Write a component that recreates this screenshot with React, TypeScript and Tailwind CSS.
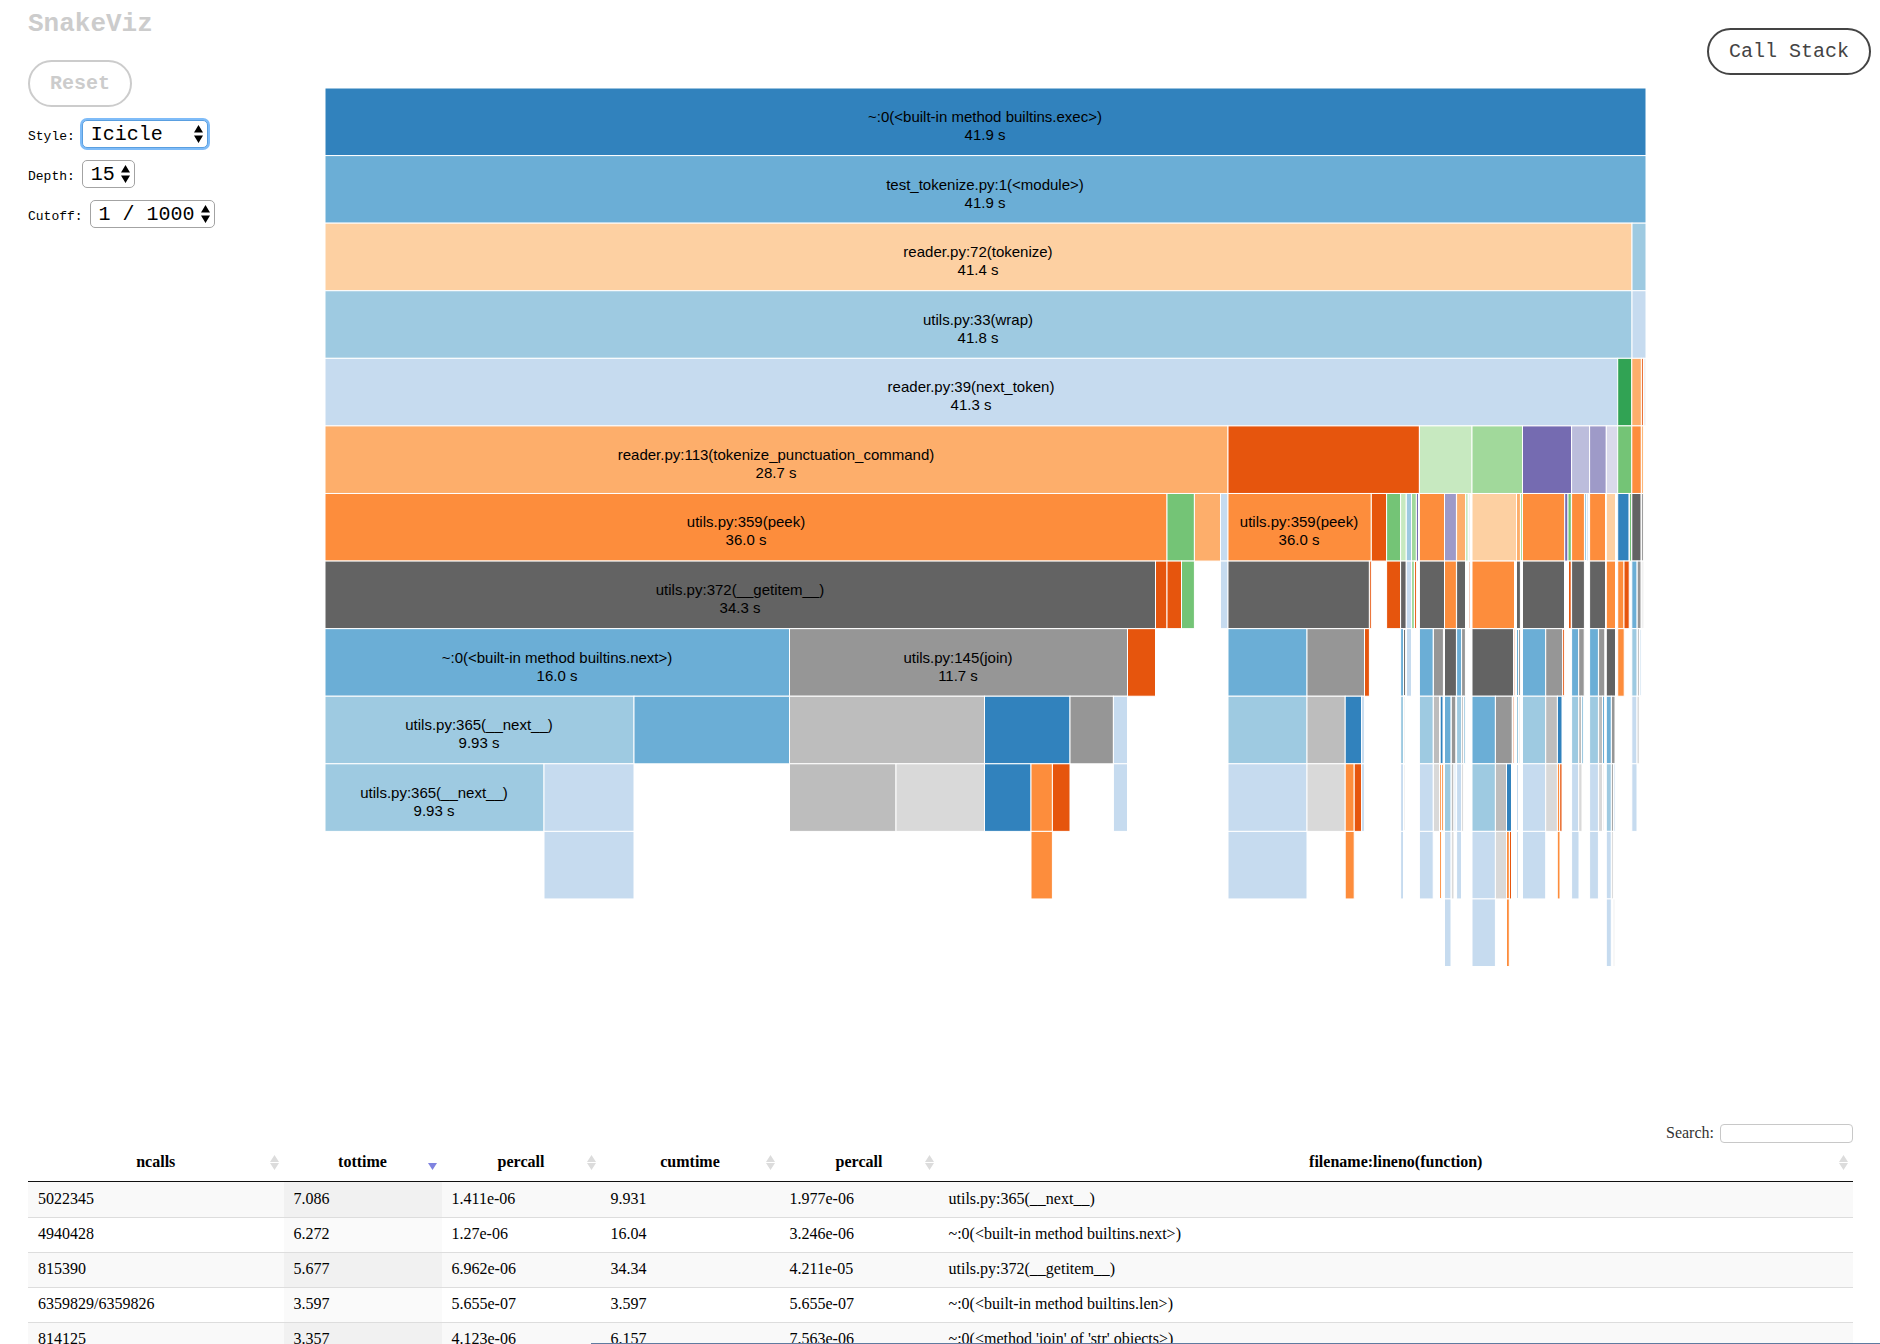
import React from "react";

const C = {
  blue1: "#3182bd", blue2: "#6baed6", blue3: "#9ecae1", blue4: "#c6dbef",
  red: "#e6550d", or2: "#fd8d3c", or3: "#fdae6b", or4: "#fdd0a2",
  gr1: "#31a354", gr2: "#74c476", gr3: "#a1d99b", gr4: "#c7e9c0",
  pu1: "#756bb1", pu2: "#9e9ac8", pu3: "#bcbddc", pu4: "#dadaeb",
  g1: "#636363", g2: "#969696", g3: "#bdbdbd", g4: "#d9d9d9",
  faint: "#f1f1f1", pink: "#f6c9b5", paleBlue: "#dbe9f6",
};

type Cell = [number, number, string, string?, string?];

/* One array per stack level: left edge, right edge, fill, function name, time. */
const levels: Cell[][] = [
  [[325, 1646, C.blue1, "~:0(<built-in method builtins.exec>)", "41.9 s"]],
  [[325, 1646, C.blue2, "test_tokenize.py:1(<module>)", "41.9 s"]],
  [[325, 1632, C.or4, "reader.py:72(tokenize)", "41.4 s"], [1632, 1646, C.blue3]],
  [[325, 1632, C.blue3, "utils.py:33(wrap)", "41.8 s"], [1632, 1646, C.blue4]],
  [
    [325, 1617.7, C.blue4, "reader.py:39(next_token)", "41.3 s"],
    [1617.7, 1631.8, C.gr1], [1631.8, 1641.4, C.or3], [1641.4, 1643.4, C.red], [1643.4, 1646, C.faint],
  ],
  [
    [325, 1228, C.or3, "reader.py:113(tokenize_punctuation_command)", "28.7 s"],
    [1228, 1419.4, C.red], [1419.4, 1472, C.gr4], [1472, 1522.5, C.gr3], [1522.5, 1571.6, C.pu1],
    [1571.6, 1589.6, C.pu3], [1589.6, 1606.3, C.pu2], [1606.3, 1617.7, C.pu4],
    [1617.7, 1631.8, C.gr2], [1631.8, 1641.3, C.or2], [1641.4, 1643.4, C.or3],
  ],
  [
    [325, 1167, C.or2, "utils.py:359(peek)", "36.0 s"],
    [1167, 1194.4, C.gr2], [1194.4, 1220.5, C.or3], [1220.5, 1228, C.blue4],
    [1228, 1371.3, C.or2, "utils.py:359(peek)", "36.0 s"],
    [1371.3, 1386.6, C.red], [1386.6, 1400.6, C.gr2], [1400.6, 1406.2, C.gr4], [1406.3, 1411.5, C.blue3],
    [1411.5, 1416.3, C.gr3], [1416.4, 1418.5, C.pu1], [1419.4, 1444.5, C.or2], [1444.5, 1456.4, C.pu2],
    [1456.6, 1465.5, C.or3], [1465.5, 1468.3, C.gr4], [1468.3, 1470.4, C.faint],
    [1472, 1516.5, C.or4], [1516.5, 1520.4, C.or3], [1520.5, 1522.4, C.gr3],
    [1522.5, 1564.5, C.or2], [1564.7, 1568, C.pu1], [1568, 1571.3, C.gr2],
    [1571.6, 1584.4, C.or2], [1584.5, 1586.5, C.blue3], [1586.5, 1588.6, C.paleBlue],
    [1589.6, 1605.5, C.or2], [1606.3, 1615.5, C.or4], [1617.7, 1629, C.blue1], [1629.4, 1631.5, C.gr2],
    [1631.8, 1641, C.g1], [1641.4, 1643.4, C.g2],
  ],
  [
    [325, 1155.5, C.g1, "utils.py:372(__getitem__)", "34.3 s"],
    [1155.5, 1167, C.red], [1167, 1181.5, C.red], [1181.5, 1194.4, C.gr2], [1220.5, 1228, C.blue4],
    [1228, 1369.4, C.g1], [1369.4, 1371.3, C.red], [1386.6, 1400.6, C.red], [1400.6, 1406.2, C.g1],
    [1406.3, 1411.5, C.blue4], [1411.5, 1414.4, C.gr3], [1414.5, 1416.4, C.red],
    [1419.4, 1444.5, C.g1], [1444.5, 1456.4, C.or2], [1456.6, 1465.5, C.g1], [1468.5, 1470.4, C.pink],
    [1472, 1514.5, C.or2], [1516.5, 1520.4, C.g1], [1522.5, 1564.5, C.g1], [1568.5, 1571.2, C.red],
    [1571.6, 1584.4, C.g1], [1589.6, 1605.5, C.g1], [1606.3, 1615.5, C.or2], [1617.7, 1624, C.or2],
    [1624, 1629.2, C.red], [1631.8, 1637, C.blue2], [1637.2, 1641.2, C.g2], [1641.2, 1644, C.faint],
  ],
  [
    [325, 789.5, C.blue2, "~:0(<built-in method builtins.next>)", "16.0 s"],
    [789.5, 1127.5, C.g2, "utils.py:145(join)", "11.7 s"],
    [1127.5, 1155.5, C.red], [1228, 1307, C.blue2], [1307, 1364.5, C.g2], [1364.5, 1369.4, C.red],
    [1400.6, 1403.5, C.blue2], [1403.5, 1405.4, C.g1], [1406.5, 1411.5, C.blue4],
    [1419.4, 1433.2, C.blue2], [1433.4, 1443.4, C.g2], [1444.5, 1456.4, C.g1], [1456.6, 1461.5, C.blue2],
    [1461.6, 1465.4, C.g2], [1472, 1513.5, C.g1], [1513.5, 1515.2, C.pink],
    [1516.5, 1518.5, C.blue2], [1518.5, 1520.4, C.g2], [1522.5, 1545.7, C.blue2], [1545.7, 1562.6, C.g2],
    [1562.6, 1564.4, C.red], [1571.6, 1578.5, C.blue2], [1578.7, 1584.2, C.g2],
    [1589.6, 1598.4, C.blue2], [1598.6, 1604.8, C.g2], [1606.3, 1615.5, C.g1], [1617.7, 1624.2, C.or2],
    [1631.8, 1637, C.blue3], [1637.4, 1639.4, C.g3], [1639.6, 1641.4, C.paleBlue],
  ],
  [
    [325, 634, C.blue3, "utils.py:365(__next__)", "9.93 s"],
    [634, 789.5, C.blue2], [789.5, 984.5, C.g3], [984.5, 1070, C.blue1], [1070, 1113.4, C.g2],
    [1113.4, 1127.5, C.blue4], [1228, 1307, C.blue3], [1307, 1345.2, C.g3], [1345.2, 1361.6, C.blue1],
    [1361.6, 1364.4, C.blue4], [1400.6, 1403.5, C.blue3], [1403.5, 1405.4, C.faint],
    [1419.4, 1433.2, C.blue3], [1433.4, 1439.5, C.g3], [1440.2, 1443, C.blue1], [1444.5, 1451, C.blue2],
    [1451.3, 1455.8, C.g2], [1456.6, 1461.5, C.blue3], [1461.6, 1463.4, C.g3], [1463.5, 1465.3, C.blue3],
    [1472, 1495.4, C.blue2], [1495.4, 1512.2, C.g2], [1512.5, 1514.4, C.pink],
    [1516.5, 1518.5, C.blue3], [1518.5, 1520.4, C.faint], [1522.5, 1545.7, C.blue3],
    [1545.7, 1557.4, C.g3], [1557.4, 1562, C.blue1], [1571.6, 1578.5, C.blue3], [1578.7, 1581.5, C.g3],
    [1581.5, 1583.6, C.blue3], [1589.6, 1598.4, C.blue3], [1598.6, 1602.5, C.g3], [1602.5, 1604.6, C.blue2],
    [1606.3, 1611.3, C.blue2], [1611.4, 1615, C.g2], [1631.8, 1637, C.blue4], [1637, 1639.4, C.g4],
  ],
  [
    [325, 544, C.blue3, "utils.py:365(__next__)", "9.93 s"],
    [544, 634, C.blue4], [789.5, 896, C.g3], [896, 984.5, C.g4], [984.5, 1031, C.blue1],
    [1031, 1052.4, C.or2], [1052.4, 1070, C.red], [1113.4, 1127.5, C.blue4], [1228, 1307, C.blue4],
    [1307, 1345.2, C.g4], [1345.2, 1354.2, C.or2], [1354.2, 1361.6, C.red], [1361.6, 1364.4, C.blue4],
    [1400.6, 1403.5, C.blue4], [1403.5, 1405.4, C.faint], [1419.4, 1433.2, C.blue4], [1433.4, 1439.5, C.g4],
    [1439.5, 1441.3, C.or2], [1441.5, 1443.3, C.or2], [1444.5, 1451, C.blue3], [1451.3, 1454, C.g3],
    [1454, 1456, C.paleBlue], [1456.6, 1461.5, C.blue4], [1461.6, 1463.6, C.g4],
    [1472, 1495.4, C.blue3], [1495.4, 1506.5, C.g3], [1506.5, 1511.5, C.blue1],
    [1516.5, 1518.5, C.blue4], [1522.5, 1545.7, C.blue4], [1545.7, 1557.4, C.g4], [1557.4, 1559.7, C.or2],
    [1559.7, 1562, C.red], [1571.6, 1578.7, C.blue4], [1578.7, 1582, C.g4], [1589.6, 1598.4, C.blue4],
    [1598.6, 1602.6, C.g4], [1602.6, 1604.4, C.faint], [1606.3, 1611.3, C.blue3], [1611.4, 1613.4, C.g2],
    [1613.4, 1615.3, C.paleBlue], [1631.8, 1637, C.blue4],
  ],
  [
    [544, 634, C.blue4], [1031, 1052.4, C.or2], [1228, 1307, C.blue4], [1345.2, 1354.2, C.or2],
    [1400.6, 1403.5, C.blue4], [1419.4, 1433.2, C.blue4], [1439.5, 1441.4, C.or2],
    [1444.5, 1451, C.blue4], [1451.3, 1454, C.g4], [1456.6, 1461.5, C.blue4], [1472, 1495.4, C.blue4],
    [1495.4, 1506.5, C.g4], [1506.5, 1509.4, C.or2], [1509.4, 1511.5, C.red], [1516.5, 1518.5, C.blue4],
    [1522.5, 1545.7, C.blue4], [1557.3, 1560, C.or2], [1571.6, 1579, C.blue4],
    [1589.6, 1598.4, C.blue4], [1606.3, 1611.3, C.blue4], [1611.4, 1613.4, C.g4],
  ],
  [
    [1444.5, 1451, C.blue4], [1472, 1495.4, C.blue4], [1506.5, 1509.3, C.or2],
    [1606.3, 1611.3, C.blue4], [1613, 1615, C.faint],
  ],
];

const PITCH = 67.58;
const TOP = 88;

function Icicle() {
  return (
    <svg viewBox="324 88 1323 1036" className="block w-full" role="img" aria-label="Icicle chart of call times">
      {levels.map((cells, row) => {
        const y = TOP + row * PITCH;
        return (
          <g key={row}>
            {cells.map(([x0, x1, fill, name, time], i) => (
              <g key={i}>
                <rect x={x0} y={y} width={x1 - x0} height={PITCH} fill={fill} stroke="#fff" />
                {name && (
                  <text textAnchor="middle" fontSize="15" fill="#000">
                    <tspan x={Math.floor((x0 + x1) / 2)} y={Math.round(y + 34)}>{name}</tspan>
                    <tspan x={Math.floor((x0 + x1) / 2)} y={Math.round(y + 52)}>{time}</tspan>
                  </text>
                )}
              </g>
            ))}
          </g>
        );
      })}
    </svg>
  );
}

function Picker({ id, label, options, focused, className }: {
  id: string; label: string; options: string[]; focused?: boolean; className: string;
}) {
  return (
    <div className="flex items-center gap-[7px]">
      <label htmlFor={id} className="pt-[6px] text-[13px] leading-4">{label}</label>
      <div className="relative">
        <select
          id={id}
          className={
            "block h-7 appearance-none rounded-[5px] border bg-white pt-px pl-2 text-xl leading-6 text-black outline-none " +
            (focused ? "border-[#5a9fe0] ring-2 ring-[#7fbcf8] " : "border-[#a3a3a3] ") + className
          }
        >
          {options.map((o) => <option key={o}>{o}</option>)}
        </select>
        <svg viewBox="0 0 9 18" className="pointer-events-none absolute top-[5px] right-[5px] h-[18px] w-[9px]">
          <path d="M4.500 0L9 7.500H0zM0 10.500H9L4.500 18z" fill="#000" />
        </svg>
      </div>
    </div>
  );
}

function SortMark({ active }: { active?: boolean }) {
  return (
    <svg viewBox="0 0 9 15" className="pointer-events-none absolute top-3 right-[5px] h-[15px] w-[9px]">
      {active ? (
        <path d="M0 8H9L4.500 15z" fill="#7f83e0" />
      ) : (
        <path d="M4.500 0L9 7H0zM0 8H9L4.500 15z" fill="#dcdcdc" />
      )}
    </svg>
  );
}

const columns = [
  { name: "ncalls", width: "w-[14%]" },
  { name: "tottime", width: "w-[158px]" },
  { name: "percall", width: "w-[159px]" },
  { name: "cumtime", width: "w-[179px]" },
  { name: "percall", width: "w-[159px]" },
  { name: "filename:lineno(function)", width: "" },
];

const rows = [
  ["5022345", "7.086", "1.411e-06", "9.931", "1.977e-06", "utils.py:365(__next__)"],
  ["4940428", "6.272", "1.27e-06", "16.04", "3.246e-06", "~:0(<built-in method builtins.next>)"],
  ["815390", "5.677", "6.962e-06", "34.34", "4.211e-05", "utils.py:372(__getitem__)"],
  ["6359829/6359826", "3.597", "5.655e-07", "3.597", "5.655e-07", "~:0(<built-in method builtins.len>)"],
  ["814125", "3.357", "4.123e-06", "6.157", "7.563e-06", "~:0(<method 'join' of 'str' objects>)"],
];

export default function App() {
  return (
    <div className="h-screen overflow-hidden bg-white font-['Liberation_Sans',sans-serif] text-black">
      <main className="flex items-start">
        <aside className="w-[324px] shrink-0 pl-7 font-['Liberation_Mono',monospace]">
          <h1 className="pt-2 text-[26px] leading-8 font-bold text-[#ccc]">SnakeViz</h1>
          <button className="mt-5 block h-[47px] rounded-[24px] border-2 border-[#ccc] px-5 pt-px text-xl font-bold text-[#ccc]">
            Reset
          </button>
          <div className="mt-[13px] flex flex-col gap-3">
            <Picker id="style" label="Style:" options={["Icicle", "Sunburst"]} focused className="w-[126px]" />
            <Picker id="depth" label="Depth:" options={["15", "20"]} className="w-[53px]" />
            <Picker id="cutoff" label="Cutoff:" options={["1 / 1000", "1 / 100"]} className="w-[125px]" />
          </div>
        </aside>
        <div className="min-w-0 flex-1 pt-[88px]">
          <Icicle />
        </div>
        <aside className="flex w-[233px] shrink-0 justify-end pt-7 pr-[9px] font-['Liberation_Mono',monospace]">
          <button className="h-[47px] rounded-[24px] border-2 border-[#444] px-5 pt-px text-xl text-[#444]">Call Stack</button>
        </aside>
      </main>
      <section className="mr-[27px] ml-7 font-['Liberation_Serif',serif] text-base">
        <div className="flex items-center justify-end gap-[6px] text-[#333]">
          <label htmlFor="search" className="pb-px leading-[18px]">Search:</label>
          <input id="search" type="search" className="h-[19px] w-[133px] rounded-[4px] border border-[#c8c8c8] bg-white px-1 text-xs outline-none" />
        </div>
        <table className="w-full table-fixed border-separate border-spacing-0">
          <thead>
            <tr>
              {columns.map((c, i) => (
                <th key={i} scope="col" className={"relative h-[39px] border-b border-[#111] px-[18px] py-0 text-center font-bold " + c.width}>
                  {c.name}
                  <SortMark active={i === 1} />
                </th>
              ))}
            </tr>
          </thead>
          <tbody>
            {rows.map((r, i) => (
              <tr key={i} className={i % 2 ? "bg-white" : "bg-[#f9f9f9]"}>
                {r.map((v, j) => (
                  <td
                    key={j}
                    className={
                      "h-[35px] px-[10px] pt-0 pb-[2px] " +
                      (i ? "border-t border-[#ddd] " : "") +
                      (j === 1 ? (i % 2 ? "bg-[#fafafa]" : "bg-[#f1f1f1]") : "")
                    }
                  >
                    {v}
                  </td>
                ))}
              </tr>
            ))}
          </tbody>
        </table>
      </section>
      <div className="fixed right-0 bottom-0 h-px w-[1289px] bg-[#5f7ba0]" />
    </div>
  );
}
